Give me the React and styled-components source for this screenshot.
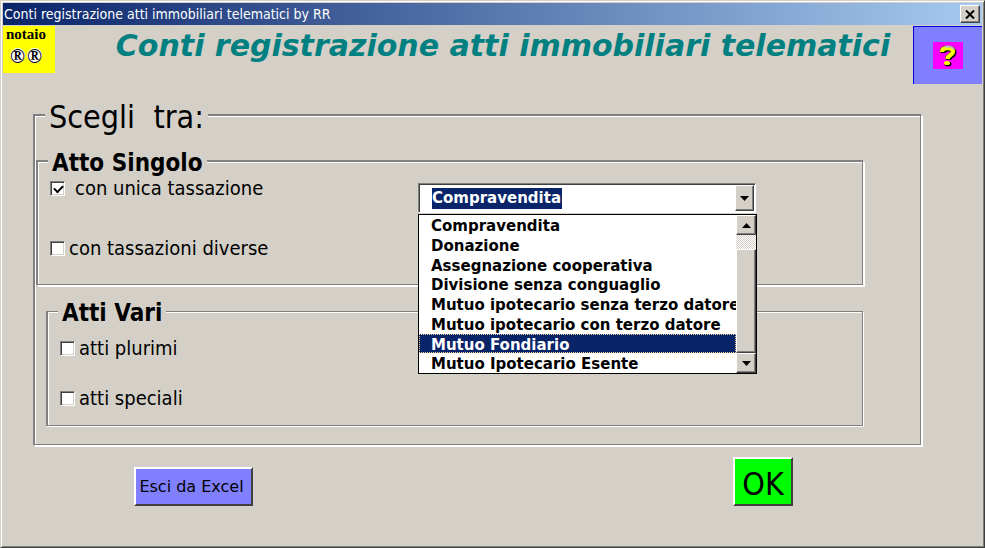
import React, { useState } from "react";
import styled, { createGlobalStyle } from "styled-components";

const OPTIONS = [
  "Compravendita",
  "Donazione",
  "Assegnazione cooperativa",
  "Divisione senza conguaglio",
  "Mutuo ipotecario senza terzo datore",
  "Mutuo ipotecario con terzo datore",
  "Mutuo Fondiario",
  "Mutuo Ipotecario Esente",
];

function Arrow({ up }) {
  return (
    <svg width="9" height="5" viewBox="0 0 9 5" aria-hidden="true">
      <path d={up ? "M0 5L4.5 0L9 5Z" : "M0 0H9L4.5 5Z"} fill="#000" />
    </svg>
  );
}

function HelpIcon() {
  const hook = "M9 10C9 7 11 6 14.5 6C18 6 20 7 20 9.5C20 13 15 12.5 14.5 17";
  return (
    <svg width="30" height="27" viewBox="0 0 30 27" aria-hidden="true">
      <rect width="30" height="27" fill="#f0f" />
      <g transform="translate(1 1)">
        <path d={hook} fill="none" stroke="#000" strokeWidth="5" />
        <ellipse cx="14" cy="21" rx="3.5" ry="2.5" fill="#000" />
      </g>
      <path d={hook} fill="none" stroke="#606000" strokeWidth="5" />
      <path d={hook} fill="none" stroke="#ff0" strokeWidth="4" />
      <path d="M12 5C15 4 19 4.500 21 7.5" fill="none" stroke="#c0c0c0" strokeWidth="2" />
      <ellipse cx="14" cy="21" rx="3" ry="2" fill="#ff0" />
    </svg>
  );
}

function Check({ label, wide, defaultChecked }) {
  return (
    <CheckLabel $wide={wide}>
      <CheckBox type="checkbox" defaultChecked={defaultChecked} />
      {label}
    </CheckLabel>
  );
}

function DeedPicker() {
  const [value, setValue] = useState("Compravendita");
  const [active, setActive] = useState("Mutuo Fondiario");
  const [open, setOpen] = useState(true);

  const pick = (option) => {
    setValue(option);
    setOpen(false);
  };

  return (
    <Combo>
      <ComboField>
        <ComboSelect
          aria-label="Tipo di atto"
          value={value}
          onChange={(e) => setValue(e.target.value)}
        >
          {OPTIONS.map((option) => (
            <option key={option}>{option}</option>
          ))}
        </ComboSelect>
        <ArrowButton
          type="button"
          aria-label="Apri elenco"
          onClick={() => setOpen(!open)}
        >
          <Arrow />
        </ArrowButton>
      </ComboField>
      {open && (
        <DropDown>
          <List role="listbox" aria-label="Tipi di atto">
            {OPTIONS.map((option) => (
              <Item
                key={option}
                role="option"
                aria-selected={option === active}
                $active={option === active}
                onMouseEnter={() => setActive(option)}
                onClick={() => pick(option)}
              >
                {option}
              </Item>
            ))}
          </List>
          <ScrollBar>
            <ScrollButton type="button" aria-label="Su">
              <Arrow up />
            </ScrollButton>
            <Thumb />
            <ScrollButton type="button" aria-label="Giù">
              <Arrow />
            </ScrollButton>
          </ScrollBar>
        </DropDown>
      )}
    </Combo>
  );
}

function App() {
  return (
    <>
      <GlobalStyle />
      <Window>
        <TitleBar>
          <TitleText>Conti registrazione atti immobiliari telematici by RR</TitleText>
          <CloseButton type="button" aria-label="Chiudi">
            <svg width="10" height="9" viewBox="0 0 10 9" aria-hidden="true">
              <path d="M1 0.5L9 8.5M9 0.5L1 8.5" stroke="#000" strokeWidth="2" />
            </svg>
          </CloseButton>
        </TitleBar>
        <Header>
          <Logo>
            <LogoName>notaio</LogoName>
            <LogoMarks>
              <Mark>®</Mark>
              <Mark>®</Mark>
            </LogoMarks>
          </Logo>
          <Heading>Conti registrazione atti immobiliari telematici</Heading>
          <HelpButton type="button" aria-label="Aiuto">
            <HelpIcon />
          </HelpButton>
        </Header>
        <MainGroup>
          <MainLegend>Scegli&nbsp; tra:</MainLegend>
          <Groups>
            <Group>
              <GroupLegend>Atto Singolo</GroupLegend>
              <SingleBody>
                <CheckList $gap={34}>
                  <Check label="con unica tassazione" wide defaultChecked />
                  <Check label="con tassazioni diverse" />
                </CheckList>
                <DeedPicker />
              </SingleBody>
            </Group>
            <VariousGroup>
              <GroupLegend>Atti Vari</GroupLegend>
              <VariousBody>
                <CheckList $gap={24}>
                  <Check label="atti plurimi" />
                  <Check label="atti speciali" />
                </CheckList>
              </VariousBody>
            </VariousGroup>
          </Groups>
        </MainGroup>
        <Footer>
          <ExitButton type="button">Esci da Excel</ExitButton>
          <OkButton type="button">OK</OkButton>
        </Footer>
      </Window>
    </>
  );
}

export default App;

const condensed = `"DejaVu Sans Condensed", "DejaVu Sans", Tahoma, sans-serif`;
const wide = `"DejaVu Sans", Verdana, sans-serif`;

const GlobalStyle = createGlobalStyle`
  * {
    box-sizing: border-box;
  }
  body {
    margin: 0;
    background: #d4d0c8;
    color: #000;
    font-family: ${condensed};
    font-stretch: condensed;
  }
  button, select, input {
    margin: 0;
    padding: 0;
    border-radius: 0;
    color: #000;
    font-family: inherit;
    font-stretch: inherit;
  }
`;
const Window = styled.main`
  min-height: 100vh;
  padding: 2px;
  border: 1px solid;
  border-color: #d4d0c8 #404040 #404040 #d4d0c8;
  box-shadow: inset 1px 1px 0 #fff, inset -1px -1px 0 #808080;
`;
const TitleBar = styled.div`
  display: flex;
  align-items: center;
  justify-content: space-between;
  height: 22px;
  margin-bottom: 1px;
  padding: 0 2px 0 1px;
  background: linear-gradient(to right, #0a246a, #a6caf0);
`;
const TitleText = styled.span`
  color: #fff;
  font-size: 14px;
  line-height: 22px;
  white-space: nowrap;
`;
const Raised = styled.button`
  display: flex;
  align-items: center;
  justify-content: center;
  flex: none;
  background: #d4d0c8;
  border: 1px solid;
  border-color: #fff #404040 #404040 #fff;
  box-shadow: inset -1px -1px 0 #808080;
`;
const CloseButton = styled(Raised)`
  width: 20px;
  height: 18px;
`;
const Header = styled.header`
  display: flex;
  align-items: flex-start;
  justify-content: space-between;
`;
const Logo = styled.div`
  width: 52px;
  height: 47px;
  padding-left: 3px;
  background: #ff0;
  font-family: "Liberation Serif", "Times New Roman", serif;
  font-stretch: normal;
  font-weight: bold;
`;
const LogoName = styled.div`
  font-size: 15px;
  line-height: 17px;
`;
const LogoMarks = styled.div`
  display: flex;
  gap: 2px;
  padding: 5px 0 0 4px;
`;
const Mark = styled.span`
  width: 15px;
  height: 15px;
  border-radius: 50%;
  background: #fff;
  font-size: 20px;
  line-height: 17px;
`;
const Heading = styled.h1`
  flex: 1;
  margin: 0;
  padding-left: 38px;
  color: #008080;
  font-family: ${wide};
  font-stretch: normal;
  font-size: 30px;
  font-style: italic;
  line-height: 40px;
  text-align: center;
  white-space: nowrap;
`;
const HelpButton = styled.button`
  display: flex;
  align-items: center;
  justify-content: center;
  width: 69px;
  height: 58px;
  background: #8080ff;
  border: 0 solid #0000e0;
  border-width: 1px 0 0 1px;
`;
const Group = styled.fieldset`
  min-width: 0;
  margin: 0;
  padding: 0;
  border: 1px solid #808080;
  border-width: 2px 1px 1px 2px;
  box-shadow: inset 1px 1px 0 #fff, 2px 2px 0 #fff;
`;
const MainGroup = styled(Group)`
  margin: 13px 61px 0 30px;
`;
const VariousGroup = styled(Group)`
  margin: 12px 0 0 10px;
  border-top-width: 1px;
  box-shadow: inset 1px 1px 0 #fff, 1px 1px 0 #fff;
`;
const GroupLegend = styled.legend`
  margin-left: 10px;
  padding: 4px 4px 0;
  background: #d4d0c8;
  font-size: 24px;
  font-weight: bold;
  line-height: 24px;
`;
const MainLegend = styled(GroupLegend)`
  font-size: 32px;
  font-weight: normal;
  line-height: 32px;
`;
const Groups = styled.div`
  padding: 14px 57px 18px 1px;
`;
const SingleBody = styled.div`
  display: grid;
  grid-template-columns: 46% 338px;
  align-items: start;
  padding: 0 12px 23px;
`;
const VariousBody = styled.div`
  padding: 10px 12px 14px;
`;
const CheckList = styled.div`
  display: flex;
  flex-direction: column;
  align-items: flex-start;
  gap: ${(props) => props.$gap}px;
`;
const CheckLabel = styled.label`
  display: flex;
  align-items: center;
  gap: ${(props) => (props.$wide ? 10 : 4)}px;
  font-size: 20px;
  line-height: 26px;
  white-space: nowrap;
`;
const CheckBox = styled.input`
  appearance: none;
  width: 15px;
  height: 15px;
  background: #fff;
  border: 1px solid;
  border-color: #808080 #fff #fff #808080;
  box-shadow: inset 1px 1px 0 #404040, inset -1px -1px 0 #d4d0c8;
  &:checked::before {
    content: "";
    display: block;
    width: 7px;
    height: 4px;
    margin: 3px 0 0 3px;
    border: solid #000;
    border-width: 0 0 2px 2px;
    transform: rotate(-45deg);
  }
`;
const Combo = styled.div`
  position: relative;
  margin-top: 8px;
  font-family: ${wide};
  font-stretch: normal;
  font-size: 15px;
  font-weight: bold;
`;
const ComboField = styled.div`
  display: flex;
  height: 30px;
  background: #fff;
  border: 1px solid;
  border-color: #808080 #fff #fff #808080;
  box-shadow: inset 1px 1px 0 #404040;
  padding: 1px 1px 1px 0;
`;
const ComboSelect = styled.select`
  appearance: none;
  flex: 1;
  min-width: 0;
  padding-left: 13px;
  border: none;
  outline: none;
  background: linear-gradient(#0a246a, #0a246a) 13px 3px / 130px 21px no-repeat;
  color: #fff;
  font-size: 15px;
  font-weight: bold;
  option {
    color: #000;
  }
`;
const ArrowButton = styled(Raised)`
  width: 19px;
`;
const DropDown = styled.div`
  position: absolute;
  top: 31px;
  left: 0;
  z-index: 1;
  display: flex;
  width: 339px;
  height: 160px;
  background: #fff;
  border: 1px solid #000;
`;
const List = styled.ul`
  display: grid;
  grid-auto-rows: 1fr;
  flex: 1;
  min-width: 0;
  margin: 0;
  padding: 0;
  list-style: none;
`;
const Item = styled.li`
  padding-left: 12px;
  overflow: hidden;
  line-height: 22px;
  white-space: nowrap;
  background: ${(props) => (props.$active ? "#0a246a" : "#fff")};
  color: ${(props) => (props.$active ? "#fff" : "#000")};
  outline: ${(props) => (props.$active ? "1px dotted #f5db95" : "none")};
  outline-offset: -1px;
`;
const ScrollBar = styled.div`
  display: flex;
  flex-direction: column;
  width: 20px;
  background: repeating-conic-gradient(#d4d0c8 0 25%, #fff 0 50%) 0 0 / 2px 2px;
`;
const ScrollButton = styled(Raised)`
  height: 20px;
`;
const Thumb = styled.div`
  flex: 1;
  margin-top: 14px;
  background: #d4d0c8;
  border: 1px solid;
  border-color: #fff #404040 #404040 #fff;
  box-shadow: inset -1px -1px 0 #808080;
`;
const Footer = styled.footer`
  display: flex;
  align-items: flex-end;
  justify-content: space-between;
  padding: 12px 189px 0 131px;
`;
const PushButton = styled.button`
  border: 2px solid;
  border-color: #fff #404040 #404040 #fff;
  white-space: nowrap;
`;
const ExitButton = styled(PushButton)`
  width: 119px;
  height: 39px;
  padding-right: 4px;
  background: #8080ff;
  font-family: ${wide};
  font-stretch: normal;
  font-size: 16px;
`;
const OkButton = styled(PushButton)`
  width: 60px;
  height: 49px;
  padding-top: 4px;
  background: #0f0;
  font-size: 32px;
  line-height: 40px;
`;
